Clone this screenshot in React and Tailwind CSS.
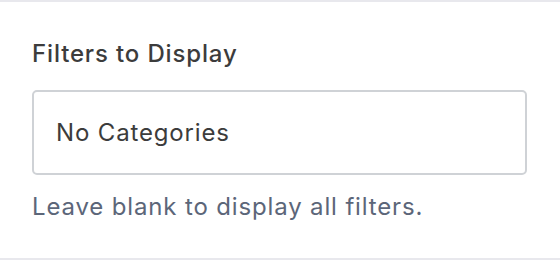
export default function App() {
  return (
    <div className="w-[560px] h-[260px] bg-white border-t-2 border-b-2 border-[#e8e8ed] box-border" style={{ fontFamily: 'Inter, "Noto Sans", sans-serif' }}>
      <div className="pl-8 pr-[33px] pt-[37px]">
        <div className="text-[24px] leading-[30px] tracking-[0.85px] text-[#3c3c3c] font-medium">Filters to Display</div>
        <div className="mt-[21px] h-[85px] border-2 border-[#cfd2d6] rounded-[5px] flex items-center pl-[22px]">
          <span className="text-[24px] leading-[30px] tracking-[0.85px] text-[#3c3c3c]">No Categories</span>
        </div>
        <div className="mt-[17px] text-[24px] leading-[30px] tracking-[0.85px] text-[#5c6679]">Leave blank to display all filters.</div>
      </div>
    </div>
  );
}
